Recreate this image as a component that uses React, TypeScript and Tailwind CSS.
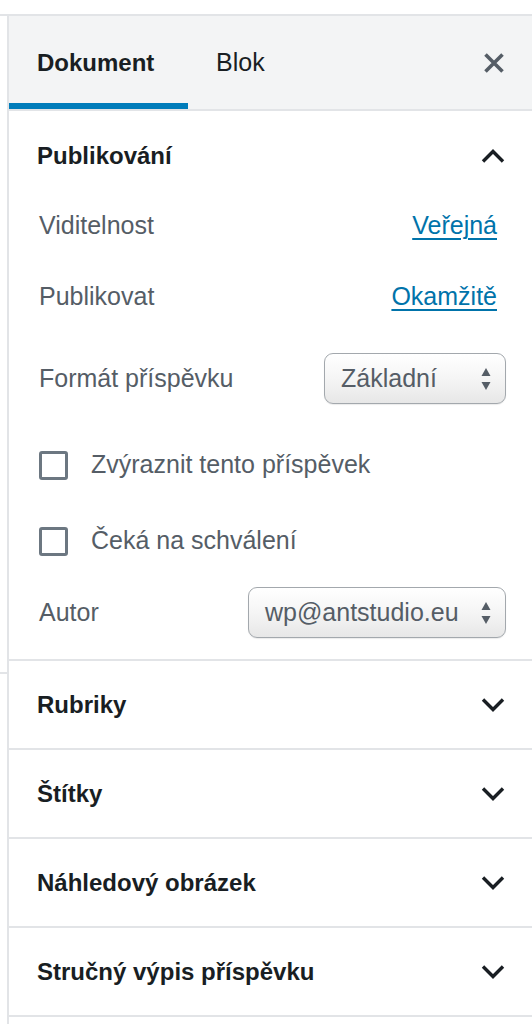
import React from 'react';

const FONT = { fontFamily: '"Liberation Sans", Arial, sans-serif' };

function Chevron({ up }: { up?: boolean }) {
  return (
    <svg width="26" height="15" viewBox="0 0 26 15" fill="none" className="shrink-0">
      <polyline
        points={up ? '3,12.5 13,2.5 23,12.5' : '3,2.5 13,12.5 23,2.5'}
        stroke="#191e23"
        strokeWidth="3.4"
        strokeLinejoin="miter"
      />
    </svg>
  );
}

function SelectArrows() {
  return (
    <svg width="10" height="22" viewBox="0 0 10 22" className="shrink-0">
      <polygon points="5,0 9.5,8 0.5,8" fill="#555d66" />
      <polygon points="0.5,14 9.5,14 5,22" fill="#555d66" />
    </svg>
  );
}

function NativeSelect({ value, width }: { value: string; width: string }) {
  return (
    <div
      className={`${width} flex h-[51px] items-center justify-between rounded-[9px] border-[1.5px] border-[#a3a8ad] bg-linear-to-b from-white via-[#f5f5f5] to-[#e7e7e7] pl-[16px] pr-[14px] text-[25px] text-[#555d66] shadow-[0_1px_1px_rgba(0,0,0,0.08)]`}
    >
      <span>{value}</span>
      <SelectArrows />
    </div>
  );
}

function Checkbox({ label }: { label: string }) {
  return (
    <div className="ml-[2px] flex h-[50px] items-center gap-[23px]">
      <div className="h-[29px] w-[29px] rounded-[3px] border-[3px] border-[#6c7781] bg-white" />
      <span className="text-[25px] text-[#555d66]">{label}</span>
    </div>
  );
}

function CollapsedPanel({ title }: { title: string }) {
  return (
    <div className="flex h-[89px] items-center justify-between border-b-2 border-[#e2e4e7] pl-[28px] pr-[26px]">
      <span className="text-[24px] font-bold text-[#191e23]">{title}</span>
      <Chevron />
    </div>
  );
}

export default function App() {
  return (
    <div className="h-[1024px] w-full overflow-hidden bg-white" style={FONT}>
      <div className="h-[16px] border-b-2 border-[#e2e4e7]" />
      <div className="flex">
        <div className="w-[7px] shrink-0">
          <div className="h-[658px] border-b-2 border-[#e2e4e7]" />
        </div>
        <div className="min-h-[1008px] flex-1 border-l-2 border-[#e2e4e7]">
          {/* tabs */}
          <div className="flex h-[95px] items-stretch border-b-2 border-[#e2e4e7] bg-[#f3f4f5] pr-[26px]">
            <div className="flex w-[179px] items-center pl-[28px] text-[24px] font-bold text-[#191e23] shadow-[inset_0_-6px_0_#007cba]">
              Dokument
            </div>
            <div className="flex items-center pl-[28px] text-[25px] text-[#191e23]">Blok</div>
            <div className="flex-1" />
            <div className="flex items-center">
              <svg width="24" height="24" viewBox="0 0 24 24" fill="none">
                <path d="M3.5 3.5 L20.5 20.5 M20.5 3.5 L3.5 20.5" stroke="#555d66" strokeWidth="3.6" />
              </svg>
            </div>
          </div>

          {/* Publikování panel */}
          <div className="border-b-2 border-[#e2e4e7] pb-[21px] pl-[28px] pr-[26px]">
            <div className="flex h-[90px] items-center justify-between">
              <span className="text-[24px] font-bold text-[#191e23]">Publikování</span>
              <Chevron up />
            </div>
            <div className="ml-[2px] flex h-[50px] items-center justify-between text-[25px]">
              <span className="text-[#555d66]">Viditelnost</span>
              <span className="mr-[9px] text-[#0073aa] underline decoration-2 underline-offset-[4px]">Veřejná</span>
            </div>
            <div className="ml-[2px] mt-[21px] flex h-[50px] items-center justify-between text-[25px]">
              <span className="text-[#555d66]">Publikovat</span>
              <span className="mr-[9px] text-[#0073aa] underline decoration-2 underline-offset-[4px]">Okamžitě</span>
            </div>
            <div className="ml-[2px] mt-[31px] flex h-[51px] items-center justify-between text-[25px]">
              <span className="text-[#555d66]">Formát příspěvku</span>
              <NativeSelect value="Základní" width="w-[182px]" />
            </div>
            <div className="mt-[36px]">
              <Checkbox label="Zvýraznit tento příspěvek" />
            </div>
            <div className="mt-[26px]">
              <Checkbox label="Čeká na schválení" />
            </div>
            <div className="ml-[2px] mt-[21px] flex h-[51px] items-center justify-between text-[25px]">
              <span className="text-[#555d66]">Autor</span>
              <NativeSelect value="wp@antstudio.eu" width="w-[258px]" />
            </div>
          </div>

          <CollapsedPanel title="Rubriky" />
          <CollapsedPanel title="Štítky" />
          <CollapsedPanel title="Náhledový obrázek" />
          <CollapsedPanel title="Stručný výpis příspěvku" />
        </div>
      </div>
    </div>
  );
}
